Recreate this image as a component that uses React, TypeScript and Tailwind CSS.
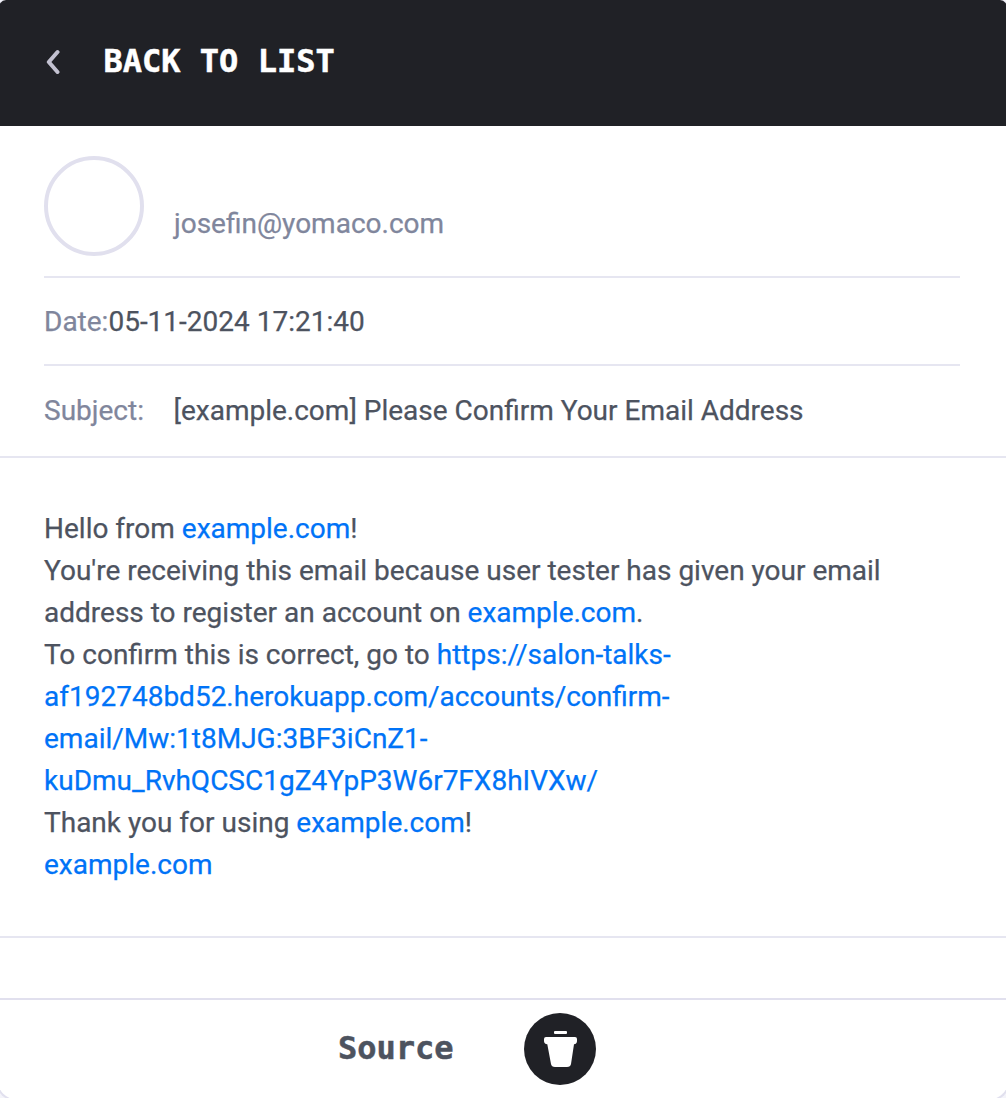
import React from "react";

const Link = ({ children }: { children: React.ReactNode }) => (
  <a className="text-[#0073f7]" href="#">{children}</a>
);

export default function App() {
  return (
    <main className="h-[1098px] w-[1006px] overflow-hidden bg-[#f4f4fa] font-[Roboto,sans-serif] text-[28px] leading-[42px] text-[#4d535f] [-webkit-text-stroke:0.25px]">
      <div className="-mx-1 flex h-[1101px] flex-col overflow-hidden rounded-t-[10px] rounded-b-[20px] border-x-2 border-b-2 border-[#e1e0ee] bg-white px-0.5">
        <header className="-mx-0.5 flex h-[126px] shrink-0 items-center bg-[#202126] pb-[5px] pl-12 text-white">
          <svg width="16" height="26" viewBox="0 0 16 26" fill="none" stroke="#c2c1d0" strokeWidth="4" strokeLinecap="round" strokeLinejoin="round">
            <path d="M11.500 4 2.800 14l8.700 10" />
          </svg>
          <span className="ml-[41.5px] font-['DejaVu_Sans_Mono',monospace] text-[32px] font-bold [-webkit-text-stroke:0.5px]">BACK TO LIST</span>
        </header>
        <section className="h-[332px] shrink-0 border-b-2 border-[#e6e6f1] px-11">
          <div className="flex h-[152px] w-[916px] items-start border-b-2 border-[#e6e6f1] pt-[30px]">
            <div className="h-[100px] w-[100px] rounded-full border-4 border-[#e1e0ee]" />
            <span className="ml-[30px] mt-[47px] text-[#80869c]">josefin@yomaco.com</span>
          </div>
          <div className="h-[88px] w-[916px] border-b-2 border-[#e6e6f1] pt-[23px]">
            <span className="text-[#80869c]">Date:</span>05-11-2024 17:21:40
          </div>
          <div className="flex pt-6">
            <span className="w-[129.5px] text-[#80869c]">Subject:</span>
            <span>[example.com] Please Confirm Your Email Address</span>
          </div>
        </section>
        <section className="h-[480px] shrink-0 whitespace-nowrap border-b-2 border-[#e6e6f1] px-11 pt-[50px]">
          <p>Hello from <Link>example.com</Link>!</p>
          <p>You're receiving this email because user tester has given your email<br />address to register an account on <Link>example.com</Link>.</p>
          <p>To confirm this is correct, go to <Link>https://salon-talks-<br />af192748bd52.herokuapp.com/accounts/confirm-<br />email/Mw:1t8MJG:3BF3iCnZ1-<br />kuDmu_RvhQCSC1gZ4YpP3W6r7FX8hIVXw/</Link></p>
          <p>Thank you for using <Link>example.com</Link>!</p>
          <p><Link>example.com</Link></p>
        </section>
        <footer className="mt-[60px] flex h-[100px] shrink-0 items-center border-t-2 border-[#e1e0ee] pl-[338px]">
          <button className="w-[116px] pb-0.5 text-left font-['DejaVu_Sans_Mono',monospace] text-[32px] font-bold [-webkit-text-stroke:0.5px]">Source</button>
          <button className="ml-[70px] flex h-[72px] w-[72px] items-center justify-center rounded-full bg-[#202126]" aria-label="Delete">
            <svg width="72" height="72" viewBox="0 0 72 72" fill="white">
              <rect x="30" y="18" width="13" height="3" rx="1" />
              <path d="M22 24 H51 Q53 24 53 26 V28 Q53 31 50 31.300 L47 51 Q46.500 54 43 54 H31 Q27.500 54 27 51 L23.300 31.300 Q20 31 20 28 V26 Q20 24 22 24 Z" />
            </svg>
          </button>
        </footer>
      </div>
    </main>
  );
}
